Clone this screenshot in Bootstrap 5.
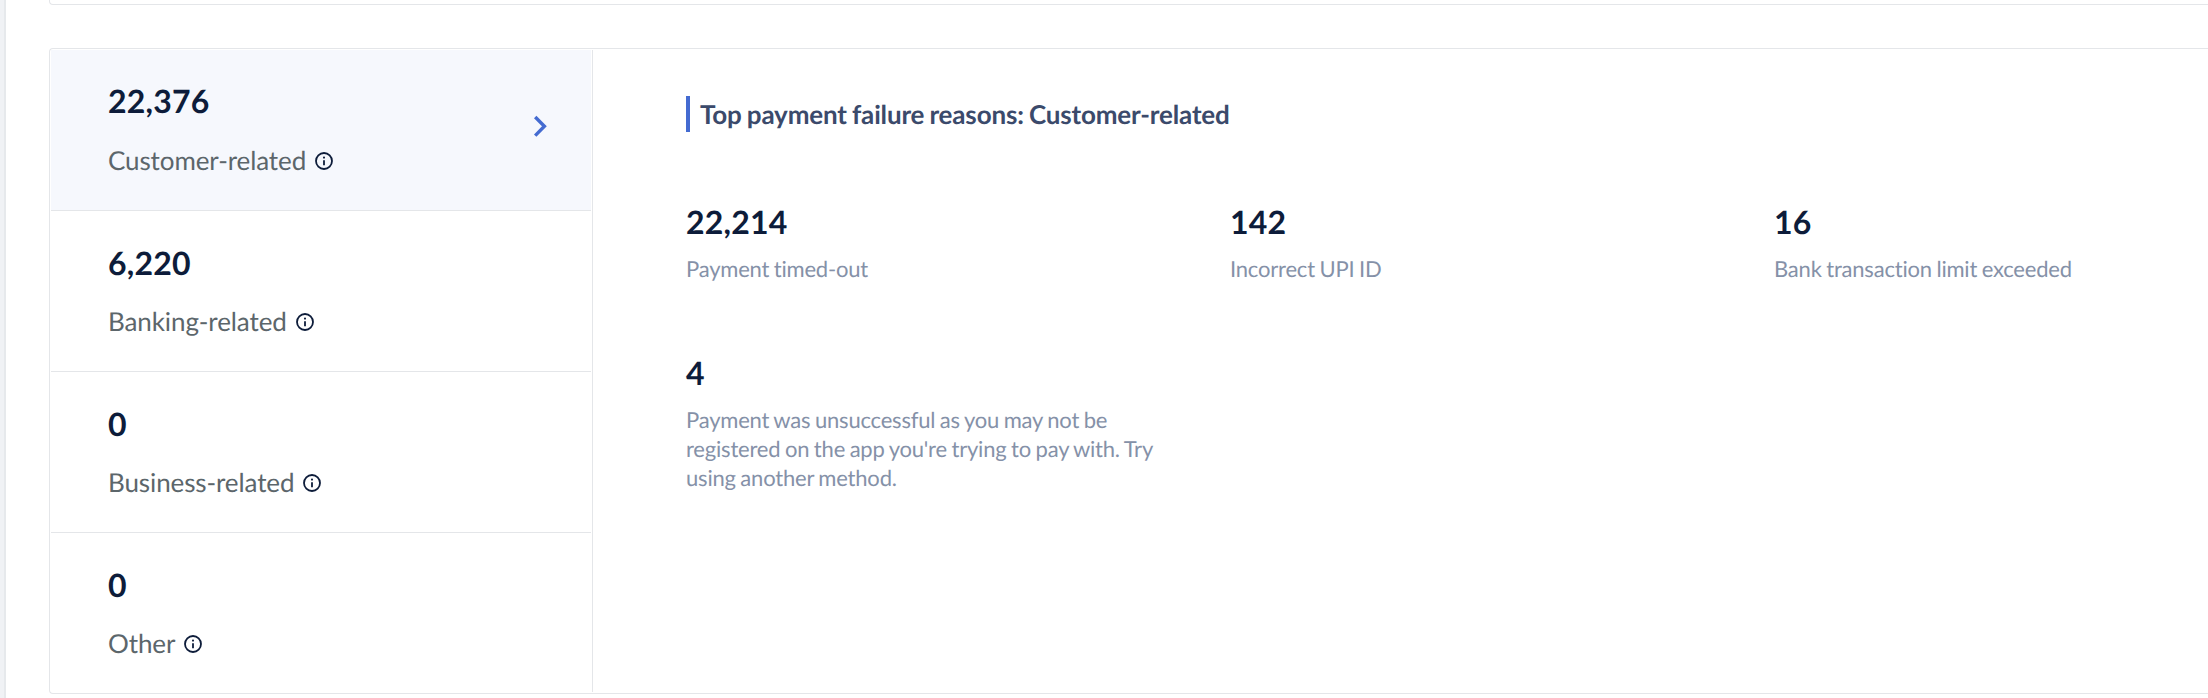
<!DOCTYPE html>
<html lang="en">
<head>
<meta charset="utf-8">
<meta name="viewport" content="width=device-width, initial-scale=1">
<title>Payment failure reasons</title>
<link href="https://cdn.jsdelivr.net/npm/bootstrap@5.3.0/dist/css/bootstrap.min.css" rel="stylesheet">
<style>
  body { font-family: Lato, "Liberation Sans", sans-serif; background: #fff; color: #0d1c3a; text-rendering: geometricPrecision; font-variant-ligatures: none; }
  .page { height: 698px; }
  .page-rail { width: 6px; background: #f0f2f5; border-right: 2px solid #e6e9ec; flex: none; box-sizing: border-box; }
  .page-main { padding-left: 43px; }
  .prev-panel { height: 5px; border: 1px solid #e4e6e9; border-width: 0 0 1px 1px; border-bottom-left-radius: 4px; }
  .panel { height: 646px; margin-top: 43px; border: 1px solid #e4e6e9; border-right: 0; border-radius: 4px 0 0 4px; padding: 1px 0 1px 1px; }
  .reasons { width: 542px; border-right: 1px solid #e4e6e9; padding-right: 1px; }
  .reason { height: 161px; padding: 32px 42px 0 57px; border-bottom: 1px solid #e4e6e9; }
  .reason:last-child { border-bottom: 0; }
  .reason.active { background: #f6f8fd; padding-top: 31px; }
  .figure-num { font-size: 32px; line-height: 40px; font-weight: 700; letter-spacing: .2px; }
  .reason-label { font-size: 26px; line-height: 32px; color: #5c666b; margin-top: 22px; letter-spacing: -.1px; }
  .reason.active .reason-label { margin-top: 23px; }
  .reason-label svg { margin: 2px 0 0 9px; }
  .chevron { margin-top: 33px; }
  .details { padding: 46px 0 0 93px; }
  .details-title { font-size: 26px; line-height: 36px; font-weight: 700; color: #3b4a6b; border-left: 4px solid #446bd1; padding-left: 10px; margin: 0; letter-spacing: -.16px; word-spacing: -1px; }
  .stats { display: grid; grid-template-columns: repeat(3, 480px); gap: 70px 64px; margin-top: 70px; }
  .stat-label { font-size: 22px; line-height: 29px; color: #8591a8; margin-top: 12px; letter-spacing: -.2px; word-spacing: -.85px; }
</style>
</head>
<body>
<svg class="d-none">
  <symbol id="info" viewBox="0 0 18 18">
    <circle cx="9" cy="9" r="8" fill="none" stroke="#0d1c3a" stroke-width="1.8"/>
    <path d="M9 8.2v5" stroke="#0d1c3a" stroke-width="1.8"/>
    <circle cx="9" cy="5.6" r="1.05" fill="#0d1c3a"/>
  </symbol>
</svg>
<div class="page d-flex overflow-hidden">
  <div class="page-rail"></div>
  <main class="page-main flex-grow-1">
    <div class="prev-panel"></div>
    <section class="panel d-flex">
      <div class="reasons flex-shrink-0">
        <div class="reason active d-flex justify-content-between">
          <div>
            <div class="figure-num">22,376</div>
            <div class="reason-label d-flex align-items-center">Customer-related<svg width="18" height="18"><use href="#info"/></svg></div>
          </div>
          <svg class="chevron" width="16" height="24" viewBox="0 0 16 24" fill="none" stroke="#446bd1" stroke-width="3.4"><path d="M2.2 3l9.2 9.3-9.2 9.3"/></svg>
        </div>
        <div class="reason">
          <div class="figure-num">6,220</div>
          <div class="reason-label d-flex align-items-center">Banking-related<svg width="18" height="18"><use href="#info"/></svg></div>
        </div>
        <div class="reason">
          <div class="figure-num">0</div>
          <div class="reason-label d-flex align-items-center">Business-related<svg width="18" height="18"><use href="#info"/></svg></div>
        </div>
        <div class="reason">
          <div class="figure-num">0</div>
          <div class="reason-label d-flex align-items-center">Other<svg width="18" height="18"><use href="#info"/></svg></div>
        </div>
      </div>
      <div class="details flex-grow-1">
        <h2 class="details-title">Top payment failure reasons: Customer-related</h2>
        <div class="stats">
          <div><div class="figure-num">22,214</div><div class="stat-label">Payment timed-out</div></div>
          <div><div class="figure-num">142</div><div class="stat-label">Incorrect UPI ID</div></div>
          <div><div class="figure-num">16</div><div class="stat-label">Bank transaction limit exceeded</div></div>
          <div><div class="figure-num">4</div><div class="stat-label">Payment was unsuccessful as you may not be registered on the app you're trying to pay with. Try using another method.</div></div>
        </div>
      </div>
    </section>
  </main>
</div>
<script src="https://cdn.jsdelivr.net/npm/bootstrap@5.3.0/dist/js/bootstrap.bundle.min.js"></script>
</body>
</html>
